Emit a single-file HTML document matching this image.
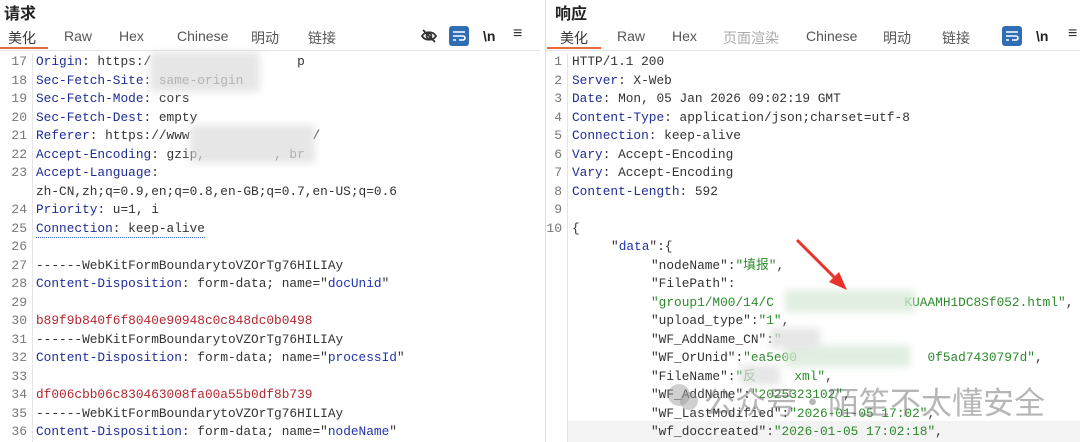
<!DOCTYPE html>
<html><head><meta charset="utf-8"><style>
*{margin:0;padding:0;box-sizing:border-box}
body{width:1080px;height:442px;overflow:hidden;background:#fff;position:relative;font-family:"Liberation Sans","Noto Sans CJK SC",sans-serif}
.h{position:absolute;top:0;font-size:16px;font-weight:bold;color:#222}
.tab{position:absolute;top:28px;font-size:14px;color:#555}
.ul{position:absolute;top:47px;height:2px;background:#e8673c}
.sep{position:absolute;top:50px;height:1px;background:#e4e4e4}
.r{position:absolute;font-family:"Liberation Mono","Noto Sans CJK SC",monospace;font-size:12.8px;white-space:pre;color:#333;line-height:16px}
.n{position:absolute;font-family:"Liberation Mono",monospace;font-size:13px;color:#777;text-align:right;width:22px;line-height:16px}
.k{color:#1f2d96}.v{color:#333}.red{color:#b3262e}.g{color:#2b8a2b}.b{color:#2233aa}
.blur{position:absolute;background:#dedede;filter:blur(4px);opacity:.75}
.ico{position:absolute;top:27px}
</style></head><body>
<div style="position:absolute;left:545px;top:0;width:1px;height:442px;background:#ddd"></div>
<div style="position:absolute;left:32px;top:54px;width:1px;height:388px;background:#e6e6e6"></div>
<div style="position:absolute;left:567px;top:54px;width:1px;height:388px;background:#e6e6e6"></div>
<div class="h" style="left:4px">请求</div>
<div class="h" style="left:555px">响应</div>
<div class="tab" style="left:8px;color:#333">美化</div><div class="ul" style="left:0;width:48px"></div>
<div class="tab" style="left:64px">Raw</div><div class="tab" style="left:119px">Hex</div>
<div class="tab" style="left:177px">Chinese</div><div class="tab" style="left:251px">明动</div><div class="tab" style="left:308px">链接</div>
<div class="sep" style="left:0;width:540px"></div>
<svg class="ico" style="left:420px" width="18" height="18" viewBox="0 0 18 18" fill="none" stroke="#333" stroke-width="1.8"><path d="M2 9c3-5 11-5 14 0c-3 5-11 5-14 0z"/><circle cx="9" cy="9" r="2.5"/><path d="M3 3l12 12"/></svg>
<div style="position:absolute;left:449px;top:26px;width:20px;height:20px;background:#2f6db5;border-radius:3px"></div>
<svg style="position:absolute;left:452px;top:29px" width="14" height="14" fill="none" stroke="#fff" stroke-width="1.6"><path d="M1 3h12M1 7h10a2 2 0 010 4H7M1 11h3"/></svg>
<div class="tab" style="left:483px;color:#222;font-weight:bold;font-size:14px">\n</div>
<div class="tab" style="left:513px;color:#333;font-size:16px;top:25px">≡</div>

<div class="tab" style="left:560px;color:#333">美化</div><div class="ul" style="left:547px;width:54px"></div>
<div class="tab" style="left:617px">Raw</div><div class="tab" style="left:672px">Hex</div>
<div class="tab" style="left:723px;color:#aaa">页面渲染</div><div class="tab" style="left:806px">Chinese</div>
<div class="tab" style="left:883px">明动</div><div class="tab" style="left:942px">链接</div>
<div class="sep" style="left:546px;width:534px"></div>
<div style="position:absolute;left:1002px;top:26px;width:20px;height:20px;background:#2f6db5;border-radius:3px"></div>
<svg style="position:absolute;left:1005px;top:29px" width="14" height="14" fill="none" stroke="#fff" stroke-width="1.6"><path d="M1 3h12M1 7h10a2 2 0 010 4H7M1 11h3"/></svg>
<div class="tab" style="left:1036px;color:#222;font-weight:bold">\n</div>
<div class="tab" style="left:1068px;color:#333;font-size:16px;top:25px">≡</div>

<div class="n" style="left:5px;top:54px">17</div><div class="r" style="left:36px;top:54px"><span class="k">Origin</span>: https:/                   p</div>
<div class="n" style="left:5px;top:72.5px">18</div><div class="r" style="left:36px;top:72.5px"><span class="k">Sec-Fetch-Site</span>: same-origin</div>
<div class="n" style="left:5px;top:91px">19</div><div class="r" style="left:36px;top:91px"><span class="k">Sec-Fetch-Mode</span>: cors</div>
<div class="n" style="left:5px;top:109.5px">20</div><div class="r" style="left:36px;top:109.5px"><span class="k">Sec-Fetch-Dest</span>: empty</div>
<div class="n" style="left:5px;top:128px">21</div><div class="r" style="left:36px;top:128px"><span class="k">Referer</span>: https://www                /</div>
<div class="n" style="left:5px;top:146.5px">22</div><div class="r" style="left:36px;top:146.5px"><span class="k">Accept-Encoding</span>: gzip,         , br</div>
<div class="n" style="left:5px;top:165px">23</div><div class="r" style="left:36px;top:165px"><span class="k">Accept-Language</span>:</div>
<div class="r" style="left:36px;top:183.5px">zh-CN,zh;q=0.9,en;q=0.8,en-GB;q=0.7,en-US;q=0.6</div>
<div class="n" style="left:5px;top:202px">24</div><div class="r" style="left:36px;top:202px"><span class="k">Priority</span>: u=1, i</div>
<div class="n" style="left:5px;top:220.5px">25</div><div class="r" style="left:36px;top:220.5px;border-bottom:1px dotted #4466cc"><span class="k">Connection</span>: keep-alive</div>
<div class="n" style="left:5px;top:239px">26</div>
<div class="n" style="left:5px;top:257.5px">27</div><div class="r" style="left:36px;top:257.5px">------WebKitFormBoundarytoVZOrTg76HILIAy</div>
<div class="n" style="left:5px;top:276px">28</div><div class="r" style="left:36px;top:276px"><span class="k">Content-Disposition</span>: form-data; name="<span class="b">docUnid</span>"</div>
<div class="n" style="left:5px;top:294.5px">29</div>
<div class="n" style="left:5px;top:313px">30</div><div class="r red" style="left:36px;top:313px">b89f9b840f6f8040e90948c0c848dc0b0498</div>
<div class="n" style="left:5px;top:331.5px">31</div><div class="r" style="left:36px;top:331.5px">------WebKitFormBoundarytoVZOrTg76HILIAy</div>
<div class="n" style="left:5px;top:350px">32</div><div class="r" style="left:36px;top:350px"><span class="k">Content-Disposition</span>: form-data; name="<span class="b">processId</span>"</div>
<div class="n" style="left:5px;top:368.5px">33</div>
<div class="n" style="left:5px;top:387px">34</div><div class="r red" style="left:36px;top:387px">df006cbb06c830463008fa00a55b0df8b739</div>
<div class="n" style="left:5px;top:405.5px">35</div><div class="r" style="left:36px;top:405.5px">------WebKitFormBoundarytoVZOrTg76HILIAy</div>
<div class="n" style="left:5px;top:424px">36</div><div class="r" style="left:36px;top:424px"><span class="k">Content-Disposition</span>: form-data; name="<span class="b">nodeName</span>"</div>
<div class="blur" style="left:150px;top:52px;width:110px;height:40px"></div>
<div class="blur" style="left:190px;top:125px;width:125px;height:38px"></div>

<div class="n" style="left:540px;top:54px">1</div><div class="r" style="left:572px;top:54px">HTTP/1.1 200</div>
<div class="n" style="left:540px;top:72.5px">2</div><div class="r" style="left:572px;top:72.5px"><span class="k">Server</span>: X-Web</div>
<div class="n" style="left:540px;top:91px">3</div><div class="r" style="left:572px;top:91px"><span class="k">Date</span>: Mon, 05 Jan 2026 09:02:19 GMT</div>
<div class="n" style="left:540px;top:109.5px">4</div><div class="r" style="left:572px;top:109.5px"><span class="k">Content-Type</span>: application/json;charset=utf-8</div>
<div class="n" style="left:540px;top:128px">5</div><div class="r" style="left:572px;top:128px"><span class="k">Connection</span>: keep-alive</div>
<div class="n" style="left:540px;top:146.5px">6</div><div class="r" style="left:572px;top:146.5px"><span class="k">Vary</span>: Accept-Encoding</div>
<div class="n" style="left:540px;top:165px">7</div><div class="r" style="left:572px;top:165px"><span class="k">Vary</span>: Accept-Encoding</div>
<div class="n" style="left:540px;top:183.5px">8</div><div class="r" style="left:572px;top:183.5px"><span class="k">Content-Length</span>: 592</div>
<div class="n" style="left:540px;top:202px">9</div>
<div class="n" style="left:540px;top:220.5px">10</div><div class="r" style="left:572px;top:220.5px">{</div>
<div class="r" style="left:611px;top:239px">"<span class="b">data</span>":{</div>
<div class="r" style="left:651px;top:257.5px">"nodeName":<span class="g">"填报"</span>,</div>
<div class="r" style="left:651px;top:276px">"FilePath":</div>
<div class="r g" style="left:651px;top:294.5px">"group1/M00/14/C                 KUAAMH1DC8Sf052.html"<span class="v">,</span></div>
<div class="r" style="left:651px;top:313px">"upload_type":<span class="g">"1"</span>,</div>
<div class="r" style="left:651px;top:331.5px">"WF_AddName_CN":<span class="g">"</span></div>
<div class="r" style="left:651px;top:350px">"WF_OrUnid":<span class="g">"ea5e00                 0f5ad7430797d"</span>,</div>
<div class="r" style="left:651px;top:368.5px">"FileName":<span class="g">"反     xml"</span>,</div>
<div class="r" style="left:651px;top:387px">"WF_AddName":<span class="g">"2025323102"</span>,</div>
<div class="r" style="left:651px;top:405.5px">"WF_LastModified":<span class="g">"2026-01-05 17:02"</span>,</div>
<div style="position:absolute;left:568px;top:421px;width:512px;height:21px;background:#f3f3f3"></div>
<div class="r" style="left:651px;top:424px">"wf_doccreated":<span class="g">"2026-01-05 17:02:18"</span>,</div>
<div class="blur" style="left:785px;top:290px;width:130px;height:22px;background:#d6e8d6"></div>
<div class="blur" style="left:785px;top:345px;width:125px;height:22px;background:#d6e8d6"></div>
<div class="blur" style="left:770px;top:328px;width:50px;height:20px"></div>
<div class="blur" style="left:740px;top:365px;width:40px;height:20px"></div>
<svg style="position:absolute;left:795px;top:238px" width="60" height="55"><path d="M2 2L45 45" stroke="#e8322a" stroke-width="3"/><path d="M52 52L34 44L44 34z" fill="#e8322a"/></svg>
<svg style="position:absolute;left:666px;top:382px" width="34" height="30"><circle cx="13" cy="13" r="11" fill="rgba(150,150,150,.45)"/><circle cx="23" cy="19" r="9" fill="rgba(150,150,150,.45)"/></svg>
<div style="position:absolute;left:704px;top:378px;font-size:31px;color:rgba(110,110,110,.5);font-family:'Noto Sans CJK SC',sans-serif;white-space:nowrap">公众号·陌笙不太懂安全</div>
</body></html>
